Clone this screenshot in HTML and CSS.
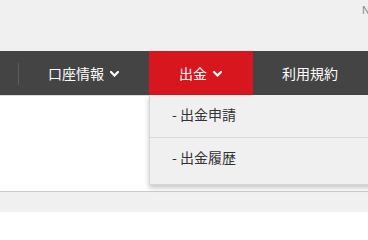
FILE: index.html
```html
<!DOCTYPE html>
<html lang="ja">
<head>
<meta charset="utf-8">
<link rel="stylesheet" href="styles.css">
</head>
<body>
<div class="page">
  <header class="topbar"><span class="topbar-text">N</span></header>
  <nav class="nav">
    <span class="nav-sep"></span>
    <div class="nav-item">
      <span>口座情報</span>
      <svg class="chev" width="9" height="6" viewBox="0 0 9 6"><path d="M1 1 L4.5 4.5 L8 1" fill="none" stroke="#fff" stroke-width="2.2" stroke-linecap="square"/></svg>
    </div>
    <div class="nav-item active">
      <span>出金</span>
      <svg class="chev" width="9" height="6" viewBox="0 0 9 6"><path d="M1 1 L4.5 4.5 L8 1" fill="none" stroke="#fff" stroke-width="2.2" stroke-linecap="square"/></svg>
      <ul class="dropdown">
        <li class="dropdown-item">- 出金申請</li>
        <li class="dropdown-item">- 出金履歴</li>
      </ul>
    </div>
    <div class="nav-item">
      <span>利用規約</span>
    </div>
  </nav>
  <main class="content"></main>
  <footer class="footer"></footer>
</div>
</body>
</html>
```

FILE: styles.css
```css
html, body {
  margin: 0;
  padding: 0;
}
body {
  background: #ffffff;
  font-family: "Noto Sans CJK JP", "Noto Sans", sans-serif;
  width: 368px;
  height: 212px;
  overflow: hidden;
}
.page {
  display: flex;
  flex-direction: column;
  height: 212px;
  overflow: hidden;
}
.topbar {
  height: 51px;
  flex: none;
  background: #f0f0f0;
  padding-left: 362px;
  box-sizing: border-box;
  overflow: hidden;
  white-space: nowrap;
}
.topbar-text {
  display: block;
  font-family: "Liberation Sans", sans-serif;
  font-size: 11px;
  line-height: 11px;
  padding-top: 5px;
  color: #888888;
}
.nav {
  height: 44px;
  flex: none;
  background: #444444;
  display: flex;
  align-items: stretch;
  border-bottom: 1px solid #dcdcdc;
  position: relative;
  z-index: 2;
}
.nav-sep {
  width: 1px;
  height: 22px;
  background: #5c5c5c;
  margin-left: 18px;
  align-self: center;
  margin-top: 1px;
}
.nav-item {
  position: relative;
  display: flex;
  align-items: center;
  padding: 0 30px 0 29px;
  color: #ffffff;
  font-size: 14px;
  white-space: nowrap;
}
.nav-item .chev {
  margin-left: 6px;
  margin-top: 1px;
}
.nav-item.active {
  background: #d7161e;
  padding: 0 31px 0 30px;
}
.dropdown {
  position: absolute;
  top: 44px;
  left: 0;
  width: 250px;
  margin: 0;
  padding: 0 0 4px 0;
  list-style: none;
  background: #f0f0f0;
  border: 1px solid #d6d6d6;
  border-top: none;
  box-shadow: 0 3px 5px rgba(0, 0, 0, 0.22);
}
.dropdown-item {
  height: 42px;
  line-height: 39px;
  padding-left: 22px;
  color: #333333;
  font-size: 14px;
}
.dropdown-item + .dropdown-item {
  border-top: 1px solid #d9d9d9;
}
.content {
  height: 95px;
  flex: none;
  background: #ffffff;
}
.footer {
  flex: 1;
  background: #f0f0f0;
  border-top: 1px solid #cccccc;
}
```
